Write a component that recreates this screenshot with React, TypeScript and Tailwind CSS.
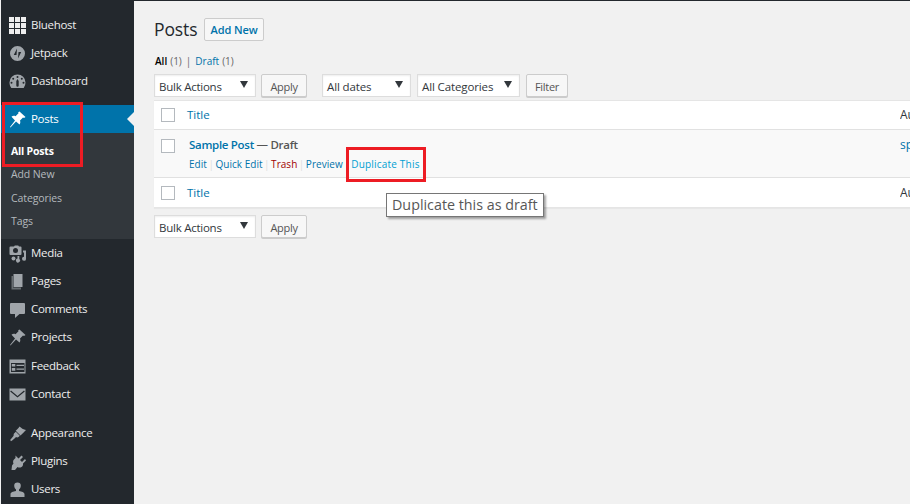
import React from 'react';

const FONT = "font-['Open_Sans',sans-serif]";

const icons: Record<string, React.ReactNode> = {
  grid: (
    <g fill="#eeeeee">
      {[0, 6, 12].map((y) =>
        [0, 6, 12].map((x) => <rect key={`${x}-${y}`} x={x + 1} y={y + 1} width="5" height="5" />),
      )}
    </g>
  ),
  jetpack: (
    <path
      fill="currentColor"
      fillRule="evenodd"
      d="M9.500 2a7.500 7.500 0 1 0 0 15 7.500 7.500 0 0 0 0-15zM9 4.500l-.5 6.500H5.800L9 4.500zm1 10l.5-6.500h2.700L10 14.500z"
    />
  ),
  dashboard: (
    <path
      fill="currentColor"
      fillRule="evenodd"
      d="M9.500 2.500a8 8 0 0 0-8 8c0 2.200.7 4.100 1.800 5.500h12.400a9 9 0 0 0 1.800-5.500 8 8 0 0 0-8-8zM9.500 4a1 1 0 1 1 0 2 1 1 0 0 1 0-2zM5.200 5.800a1 1 0 1 1 0 2 1 1 0 0 1 0-2zM13.800 5.800a1 1 0 1 1 0 2 1 1 0 0 1 0-2zM3.500 9.800a1 1 0 1 1 0 2 1 1 0 0 1 0-2zM15.500 9.800a1 1 0 1 1 0 2 1 1 0 0 1 0-2zM8.300 9l1.200-2 1.200 2v4.500a1.200 1.200 0 0 1-2.400 0z"
    />
  ),
  pin: (
    <path
      fill="currentColor"
      d="M11.500 1.500l6 5.500-1.500 1-1-.5-3 3c.6 1.600.3 3-.5 4L8 11.500l-5.500 6-.5-.5 5-6.500L3.500 6.800c1-1 2.500-1.300 4-.6l3-3-.3-1z"
    />
  ),
  media: (
    <g fill="currentColor">
      <path
        fillRule="evenodd"
        d="M2.500 2.500H6l.8-1h3.400l.8 1h1.500a1 1 0 0 1 1 1V10a1 1 0 0 1-1 1H2.500a1 1 0 0 1-1-1V3.500a1 1 0 0 1 1-1zM7.500 4a2.500 2.500 0 1 0 0 5 2.500 2.500 0 0 0 0-5z"
      />
      <circle cx="5.500" cy="14.500" r="2" />
      <path d="M15 6.500h3v8.200a2 2 0 1 1-2-1.900V8.500h-1z" />
      <path d="M9.500 12h1.800v3a2 2 0 1 1-1.800-.4z" />
    </g>
  ),
  pages: (
    <g fill="currentColor">
      <path opacity="0.55" d="M3.500 4h1.500v11.500h8V17.500H3.500z" />
      <path d="M5.500 2h9v13h-9z" />
    </g>
  ),
  comment: (
    <path fill="currentColor" d="M3 3h13a1 1 0 0 1 1 1v9a1 1 0 0 1-1 1h-4.500L7 18v-4H3a1 1 0 0 1-1-1V4a1 1 0 0 1 1-1z" />
  ),
  feedback: (
    <path
      fill="currentColor"
      fillRule="evenodd"
      d="M1.500 2.500h16v14h-16zM3 6v9h13.500V6zM3.800 7h3.500v2.500H3.800zM3.800 11h3.500v2.800H3.800zM8.500 7.800h7.500V9H8.500zM8.500 11.500h7.500v1.200H8.500z"
    />
  ),
  mail: (
    <path
      fill="currentColor"
      fillRule="evenodd"
      d="M1.500 3.500h16v12h-16zM3 5.500l6.500 5.500L16 5.500l.8.900-7.300 6.200-7.300-6.200z"
    />
  ),
  brush: (
    <path
      fill="currentColor"
      d="M11.500 2.500c1.500 1.500 4 3 6.500 3.500-1 1-3.500 3.500-5.500 5.500l-4.800-4.800c1.500-1 2.800-2.700 3.800-4.200zM7.800 7.800l4 4-1.300 1.300c-1 .5-2 .3-2.500 0-1 1-3 3-5 4.200-.5-.5-.7-1-.7-1.500 1.500-1.500 3-3.200 3.500-4.700-.3-.6-.2-1.200.5-1.800z"
    />
  ),
  plug: (
    <path
      fill="currentColor"
      d="M7.500 3.500l3 3 3-3 1.500 1.500-3 3 2 2 3-3 1 1.500-3 3c.3 1.500-.5 3-1.500 3.500-1.200.8-2.800.8-4 0L7 18H3.500l.5-4.500c.5-.5 1-1.500 1.500-2-.7-1.300-.5-3 .5-4l1.500-1.500z"
    />
  ),
  user: (
    <path
      fill="currentColor"
      d="M9.500 2.500a3.300 3.300 0 0 1 3.300 3.300c0 1.500-.8 3-1.800 3.700v1.500c2.800.5 5.500 1.300 5.500 3.300V17H2.500v-2.700c0-2 2.700-2.800 5.500-3.300V9.500c-1-.7-1.800-2.200-1.800-3.700A3.300 3.300 0 0 1 9.500 2.500z"
    />
  ),
};

const Item = ({ icon, label, active = false }: { icon: string; label: string; active?: boolean }) => (
  <div className={`relative flex h-7 items-center ${active ? 'bg-[#0073aa] text-white' : 'text-[#eeeeee]'}`}>
    <svg
      viewBox="0 0 19 19"
      className={`ml-[7px] h-[19px] w-[19px] shrink-0 ${active ? 'text-white' : 'text-[#a0a5aa]'}`}
    >
      {icons[icon]}
    </svg>
    <span className="ml-[4px] text-[11.5px] leading-none tracking-[-0.3px]">{label}</span>
    {active && (
      <span className="absolute right-0 top-[7px] h-0 w-0 border-y-[7px] border-r-[7px] border-y-transparent border-r-[#f1f1f1]" />
    )}
  </div>
);

const SubItem = ({ label, current = false, h }: { label: string; current?: boolean; h: string }) => (
  <div className={`${h} flex items-center pl-[10px] text-[10.5px] leading-none ${current ? 'font-bold tracking-[-0.2px] text-white' : 'tracking-[-0.1px] text-[#b4b9be]'}`}>
    {label}
  </div>
);

const Sidebar = () => (
  <aside className="w-[134px] shrink-0 border-l border-[#f1f1f1] bg-[#23282d] pt-[11px]">
    <Item icon="grid" label="Bluehost" />
    <Item icon="jetpack" label="Jetpack" />
    <Item icon="dashboard" label="Dashboard" />
    <div className="h-[10px]" />
    <Item icon="pin" label="Posts" active />
    <div className="h-[106px] bg-[#32373c] pt-[6px]">
      <SubItem label="All Posts" current h="h-[24px]" />
      <SubItem label="Add New" h="h-[23px]" />
      <SubItem label="Categories" h="h-[24px]" />
      <SubItem label="Tags" h="h-[23px]" />
    </div>
    <Item icon="media" label="Media" />
    <Item icon="pages" label="Pages" />
    <Item icon="comment" label="Comments" />
    <Item icon="pin" label="Projects" />
    <div className="h-px" />
    <Item icon="feedback" label="Feedback" />
    <Item icon="mail" label="Contact" />
    <div className="pt-[11px]">
      <Item icon="brush" label="Appearance" />
      <Item icon="plug" label="Plugins" />
      <Item icon="user" label="Users" />
    </div>
  </aside>
);

const Select = ({ label, w, t = 'tracking-[-0.12px]' }: { label: string; w: string; t?: string }) => (
  <div className={`${w} ${t} flex h-[23px] shrink-0 items-center justify-between border border-[#dddddd] bg-white pl-[4px] pr-[7px] text-[11.5px] leading-none text-[#32373c] shadow-[inset_0_1px_2px_rgba(0,0,0,0.07)]`}>
    <span className="pt-[2px]">{label}</span>
    <span className="mb-[2px] h-0 w-0 border-x-[4px] border-t-[7px] border-x-transparent border-t-[#32373c]" />
  </div>
);

const Btn = ({ label, w }: { label: string; w: string }) => (
  <div className={`${w} flex h-[23px] shrink-0 items-center justify-center rounded-[2px] border border-[#cccccc] bg-[#f7f7f7] pt-[1px] text-[11px] leading-none tracking-[-0.3px] text-[#555555] shadow-[0_1px_0_#cccccc]`}>
    {label}
  </div>
);

const Check = () => <div className="h-[14px] w-[14px] shrink-0 border border-[#b4b9be] bg-white" />;

const TitleRow = ({ h }: { h: string }) => (
  <div className={`${h} flex items-center bg-white pl-[7px]`}>
    <Check />
    <span className="ml-[12px] text-[11.5px] leading-none text-[#0073aa]">Title</span>
    <span className="ml-auto w-[10px] overflow-hidden whitespace-nowrap text-[12px] leading-none text-[#32373c]">Author</span>
  </div>
);

const Sep = () => <span className="mx-[1.5px] text-[#dddddd]">|</span>;

export default function App() {
  return (
    <div className={`flex h-[504px] w-[910px] overflow-hidden bg-[#f1f1f1] ${FONT}`}>
      <Sidebar />
      <main className="relative flex min-w-0 flex-1 flex-col border-t border-[#23282d] pl-[20px]">
        <div className="mt-[17px] flex h-[23px] items-center">
          <h1 className="w-[42px] text-[17.5px] leading-none tracking-[-0.1px] text-[#23282d]">Posts</h1>
          <div className="ml-[8px] flex h-[23px] w-[60px] items-center justify-center rounded-[2px] border border-[#cccccc] bg-[#f7f7f7] text-[11px] font-semibold leading-none tracking-[-0.1px] text-[#0073aa]">
            Add New
          </div>
        </div>
        <div className="mt-[13px] flex h-[14px] items-center pl-[1px] text-[10px] leading-none text-[#666666]">
          <span className="font-semibold text-black">All</span>
          <span className="ml-[3px]">(1)</span>
          <span className="mx-[4px]">|</span>
          <span className="text-[#0073aa]">Draft</span>
          <span className="ml-[3px]">(1)</span>
        </div>
        <div className="mt-[6px] flex items-center">
          <Select label="Bulk Actions" w="w-[102px]" t="tracking-[-0.25px]" />
          <div className="w-[5px]" />
          <Btn label="Apply" w="w-[46px]" />
          <div className="w-[15px]" />
          <Select label="All dates" w="w-[89px]" />
          <div className="w-[6px]" />
          <Select label="All Categories" w="w-[103px]" />
          <div className="w-[6px]" />
          <Btn label="Filter" w="w-[42px]" />
        </div>
        <div className="mt-[3px] border-y border-[#e5e5e5] shadow-[0_1px_1px_rgba(0,0,0,0.04)]">
          <TitleRow h="h-[28px]" />
          <div className="flex h-[49px] border-y border-[#e1e1e1] bg-[#f9f9f9] pl-[7px]">
            <div className="pt-[9px]">
              <Check />
            </div>
            <div className="ml-[14px] flex flex-col pt-[7px]">
              <div className="text-[11.5px] font-semibold leading-[16px] tracking-[-0.3px] text-[#555555]">
                <span className="text-[#0073aa]">Sample Post</span> — Draft
              </div>
              <div className="mt-[3px] flex items-center whitespace-nowrap text-[10px] leading-[16px] tracking-[0.03px] text-[#0073aa]">
                <span>Edit</span>
                <Sep />
                <span>Quick Edit</span>
                <Sep />
                <span className="text-[#a00000]">Trash</span>
                <Sep />
                <span>Preview</span>
                <Sep />
                <span className="tracking-[0.2px] text-[#00a0d2]">Duplicate This</span>
              </div>
            </div>
            <span className="ml-auto mt-[9px] w-[10px] overflow-hidden whitespace-nowrap text-[12px] leading-none text-[#0073aa]">spencer</span>
          </div>
          <TitleRow h="h-[29px]" />
        </div>
        <div className="mt-[7px] flex items-center">
          <Select label="Bulk Actions" w="w-[102px]" t="tracking-[-0.25px]" />
          <div className="w-[5px]" />
          <Btn label="Apply" w="w-[46px]" />
        </div>

        {/* annotation and tooltip over the table */}
        <div className="absolute left-[212px] top-[146px] h-[35px] w-[80px] border-[3px] border-[#ed1c24]" />
        <div className="absolute left-[252px] top-[192px] flex h-[24px] w-[158px] items-center whitespace-nowrap border border-[#767676] bg-white pl-[5px] text-[14.3px] leading-none text-[#575757] shadow-[2px_2px_2px_rgba(0,0,0,0.35)]">
          Duplicate this as draft
        </div>
      </main>
      <div className="absolute left-[2px] top-[102px] h-[65px] w-[81px] border-[3px] border-[#ed1c24]" />
    </div>
  );
}
